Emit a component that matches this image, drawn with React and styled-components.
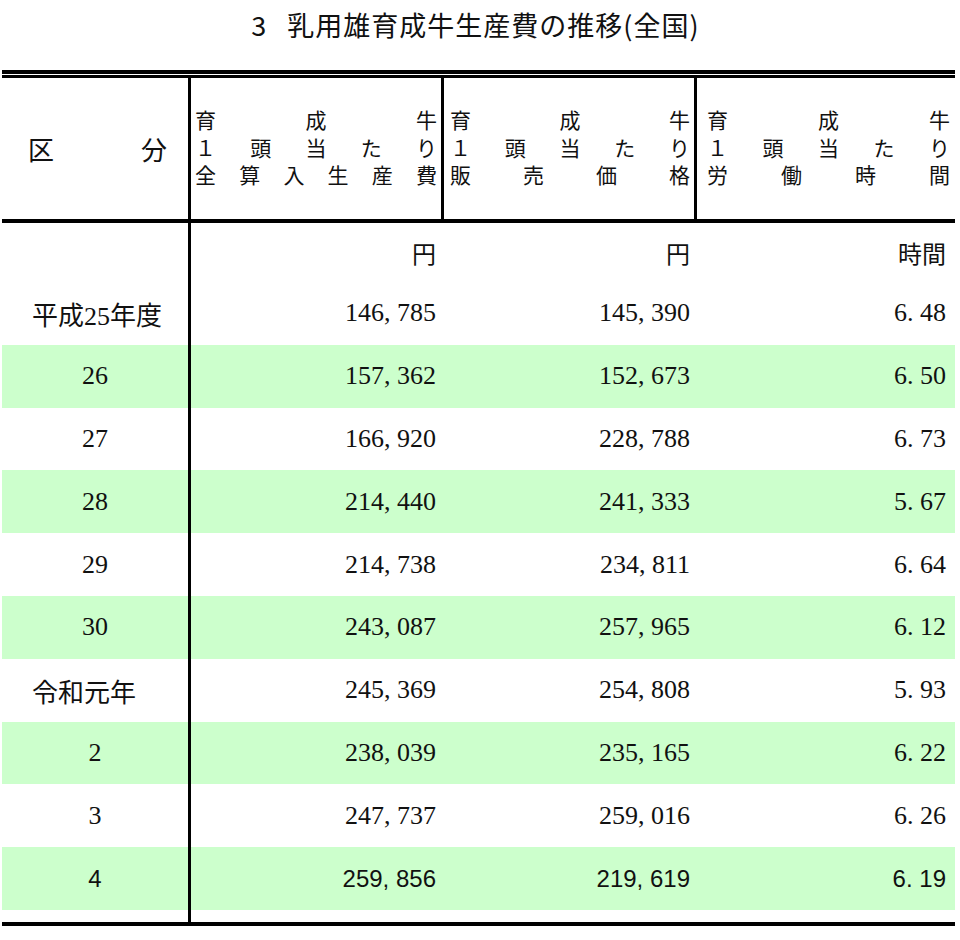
import React from "react";
import styled, { createGlobalStyle } from "styled-components";

const COLS = "189px 253px 253px 258px";
const LINE = "3px solid #000";

const rows = [
  { label: "平成25年度", era: true, cost: "146, 785", price: "145, 390", hours: "6. 48" },
  { label: "26", cost: "157, 362", price: "152, 673", hours: "6. 50" },
  { label: "27", cost: "166, 920", price: "228, 788", hours: "6. 73" },
  { label: "28", cost: "214, 440", price: "241, 333", hours: "5. 67" },
  { label: "29", cost: "214, 738", price: "234, 811", hours: "6. 64" },
  { label: "30", cost: "243, 087", price: "257, 965", hours: "6. 12" },
  { label: "令和元年", era: true, cost: "245, 369", price: "254, 808", hours: "5. 93" },
  { label: "2", cost: "238, 039", price: "235, 165", hours: "6. 22" },
  { label: "3", cost: "247, 737", price: "259, 016", hours: "6. 26" },
  { label: "4", narrow: true, cost: "259, 856", price: "219, 619", hours: "6. 19" },
];

const headers = [
  { pl: 4, pr: 4, lines: [["育", "成", "牛"], ["１", "頭", "当", "た", "り"], ["全", "算", "入", "生", "産", "費"]] },
  { pl: 6, pr: 4, lines: [["育", "成", "牛"], ["１", "頭", "当", "た", "り"], ["販", "売", "価", "格"]] },
  { pl: 10, pr: 5, lines: [["育", "成", "牛"], ["１", "頭", "当", "た", "り"], ["労", "働", "時", "間"]] },
];

const GlobalStyle = createGlobalStyle`
  body {
    margin: 0;
    background: #fff;
    color: #111;
  }
`;

const Page = styled.div`
  width: 953px;
  margin-left: 2px;
  font-family: "Liberation Serif", "Noto Sans CJK JP", serif;
`;

const Title = styled.h1`
  margin: 0 0 22px;
  padding-right: 6px;
  height: 48px;
  display: flex;
  align-items: center;
  justify-content: center;
  font-family: "Noto Sans CJK JP", sans-serif;
  font-weight: 400;
  font-size: 27px;
  letter-spacing: 1px;
  color: #111;
`;

const TitleNum = styled.span`
  margin-right: 20px;
`;

const TopRule = styled.div`
  height: 1px;
  border-top: 4px solid #000;
  border-bottom: 3px solid #000;
`;

const Header = styled.div`
  display: grid;
  grid-template-columns: ${COLS};
  height: 141px;
  border-bottom: 4px solid #000;
`;

const CornerCell = styled.div`
  display: flex;
  align-items: center;
  justify-content: space-between;
  padding: 0 21px 0 26px;
  border-right: ${LINE};
  font-family: "Noto Sans CJK JP", sans-serif;
  font-size: 26px;
`;

const HeadCell = styled.div`
  display: flex;
  flex-direction: column;
  justify-content: center;
  padding: 0 ${(p) => p.$pr}px 2px ${(p) => p.$pl}px;
  border-right: ${(p) => (p.$last ? "none" : LINE)};
  font-family: "Noto Sans CJK JP", sans-serif;
  font-size: 21px;
  line-height: 27.5px;
`;

const HeadLine = styled.div`
  display: flex;
  justify-content: space-between;
`;

const Row = styled.div`
  display: grid;
  grid-template-columns: ${COLS};
  height: ${(p) => p.$h}px;
  background: ${(p) => (p.$green ? "#ccffcc" : "transparent")};
  font-size: ${(p) => (p.$narrow ? "24px" : "26px")};
  font-family: ${(p) =>
    p.$narrow
      ? '"Liberation Sans Narrow", "Liberation Sans", sans-serif'
      : '"Liberation Serif", "Noto Sans CJK JP", serif'};
`;

const Label = styled.div`
  display: flex;
  align-items: center;
  justify-content: ${(p) => (p.$era ? "flex-start" : "center")};
  padding-left: ${(p) => (p.$era ? "30px" : "0")};
  border-right: ${LINE};
`;

const Value = styled.div`
  display: flex;
  align-items: center;
  justify-content: flex-end;
  padding-right: ${(p) => p.$pr}px;
`;

const Unit = styled(Value)`
  font-family: "Noto Sans CJK JP", sans-serif;
  font-size: 24px;
`;

const BottomRule = styled.div`
  border-top: 4px solid #000;
`;

export default function App() {
  return (
    <>
      <GlobalStyle />
      <Page>
        <Title>
          <TitleNum>3</TitleNum>乳用雄育成牛生産費の推移(全国)
        </Title>
        <TopRule />
        <Header>
          <CornerCell>
            <span>区</span>
            <span>分</span>
          </CornerCell>
          {headers.map((h, i) => (
            <HeadCell key={i} $pl={h.pl} $pr={h.pr} $last={i === headers.length - 1}>
              {h.lines.map((line, j) => (
                <HeadLine key={j}>
                  {line.map((ch, k) => (
                    <span key={k}>{ch}</span>
                  ))}
                </HeadLine>
              ))}
            </HeadCell>
          ))}
        </Header>
        <Row $h={59}>
          <Label />
          <Unit $pr={8}>円</Unit>
          <Unit $pr={7}>円</Unit>
          <Unit $pr={9}>時間</Unit>
        </Row>
        {rows.map((r, i) => (
          <Row key={r.label} $h={62.8} $green={i % 2 === 1} $narrow={r.narrow}>
            <Label $era={r.era}>{r.label}</Label>
            <Value $pr={8}>{r.cost}</Value>
            <Value $pr={7}>{r.price}</Value>
            <Value $pr={9}>{r.hours}</Value>
          </Row>
        ))}
        <Row $h={12}>
          <Label />
        </Row>
        <BottomRule />
      </Page>
    </>
  );
}
